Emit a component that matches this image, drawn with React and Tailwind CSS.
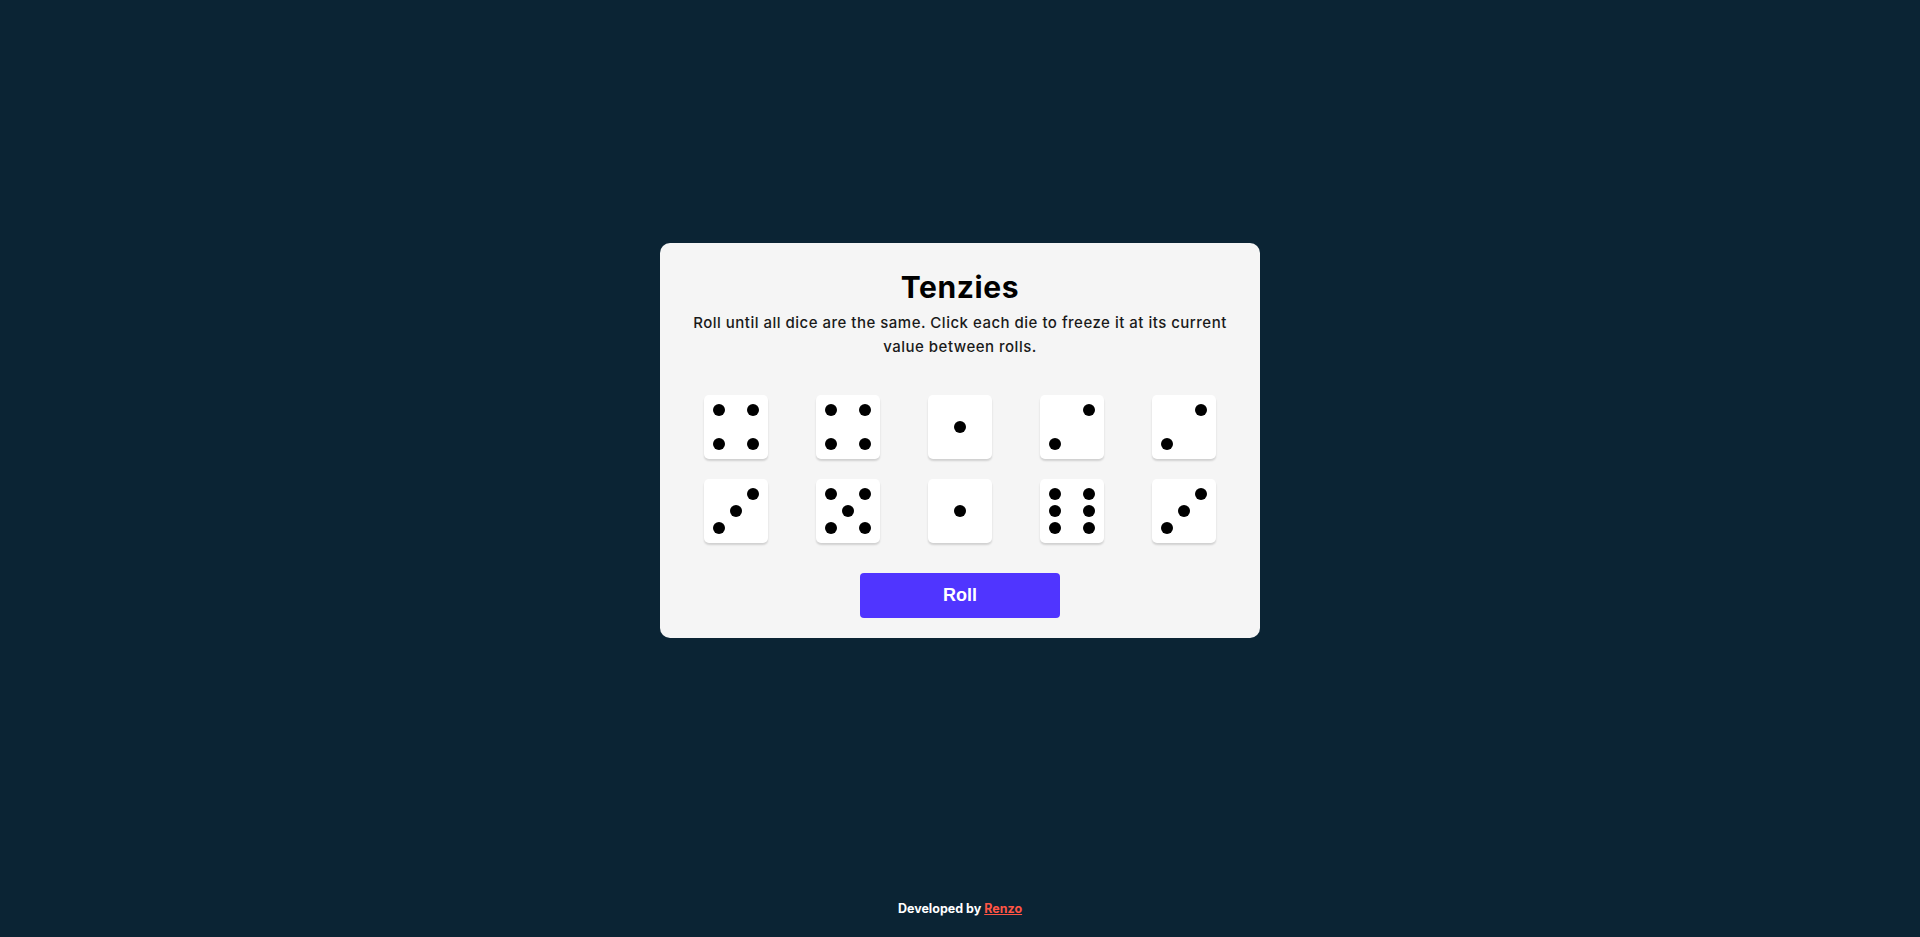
import React from 'react';

const DOTS = {
    1: [5],
    2: [3, 7],
    3: [3, 5, 7],
    4: [1, 3, 7, 9],
    5: [1, 3, 5, 7, 9],
    6: [1, 3, 4, 6, 7, 9],
};

const DICE = [4, 4, 1, 2, 2, 3, 5, 1, 6, 3];

function Die({ value }) {
    const dots = DOTS[value];
    return (
        <button className="w-16 h-16 bg-white rounded-[5px] shadow-[0_2px_2px_rgba(0,0,0,0.15)] grid grid-cols-3 grid-rows-3 p-[6px] cursor-pointer">
            {[1, 2, 3, 4, 5, 6, 7, 8, 9].map((cell) => (
                <span key={cell} className="flex items-center justify-center">
                    {dots.includes(cell) && <span className="w-3 h-3 rounded-full bg-black" />}
                </span>
            ))}
        </button>
    );
}

export default function App() {
    return (
        <div className="min-h-screen bg-[#0B2434] flex flex-col font-['Inter',sans-serif]">
            <main className="flex-1 flex items-center justify-center">
                <div className="w-[600px] bg-[#F5F5F5] rounded-[10px] pt-6 pb-5 px-8 flex flex-col items-center">
                    <h1 className="text-[30px] leading-10 font-bold text-black tracking-[0.02em]">Tenzies</h1>
                    <p className="mt-1 text-[15px] leading-6 font-medium text-[#1a1a1a] text-center tracking-[0.033em]">
                        Roll until all dice are the same. Click each die to freeze it at its current value between rolls.
                    </p>
                    <div className="mt-9 grid grid-cols-5 gap-x-12 gap-y-5">
                        {DICE.map((v, i) => (
                            <Die key={i} value={v} />
                        ))}
                    </div>
                    <button className="mt-[30px] w-[200px] h-[45px] bg-[#5035FF] rounded-[4px] text-white text-[18px] font-bold font-['Liberation_Sans',Arial,sans-serif]">
                        Roll
                    </button>
                </div>
            </main>
            <footer className="h-14 flex items-center justify-center text-[12.5px] font-bold text-white">
                <span>
                    Developed by{' '}
                    <a href="#" className="text-[#FF5545] underline">Renzo</a>
                </span>
            </footer>
        </div>
    );
}
